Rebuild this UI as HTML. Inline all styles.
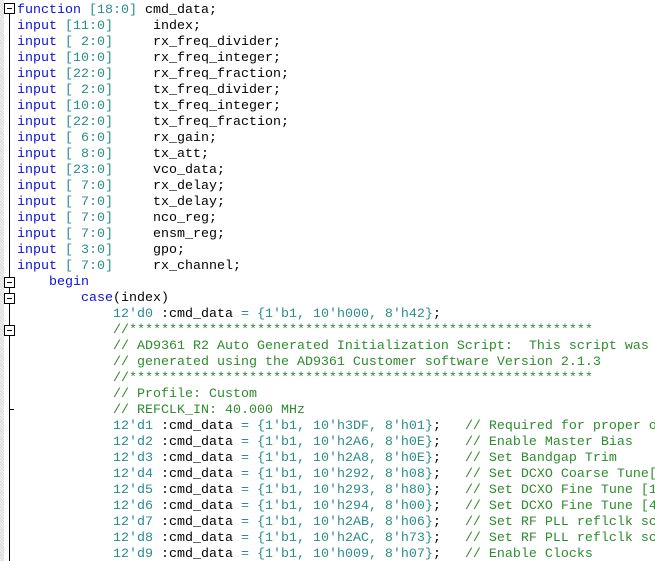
<!DOCTYPE html><html><head><style>
html,body{margin:0;width:655px;height:561px;overflow:hidden;background:#fff;position:relative}
.g{position:absolute;left:0;top:0;width:4px;height:561px;background:repeating-linear-gradient(45deg,#d8d8d8 0 1px,#f4f4f4 1px 2px)}
.vl{position:absolute;left:9px;width:1px;background:#000}
.b{position:absolute;left:4px;width:9px;height:9px;border:1px solid #000;background:#fff}
.b:after{content:"";position:absolute;left:2px;top:4px;width:5px;height:1px;background:#000}
pre{position:absolute;left:17px;top:3px;width:638px;height:558px;overflow:hidden;margin:0;font:13.33px/16px "Liberation Mono",monospace;color:#000;white-space:pre}
.k{color:#1010d0}.n{color:#2a8c8c}.c{color:#2e8b2e}
</style></head><body>
<div class="g"></div>
<div class="vl" style="top:13px;height:264px"></div>
<div class="vl" style="top:287px;height:6px"></div>
<div class="vl" style="top:303px;height:22px"></div>
<div class="vl" style="top:335px;height:226px"></div>
<div style="position:absolute;left:9px;top:409px;width:5px;height:1px;background:#000"></div>
<div class="b" style="top:3px"></div>
<div class="b" style="top:277px"></div>
<div class="b" style="top:293px"></div>
<div class="b" style="top:325px"></div>
<pre><span class="k">function</span> <span class="n">[18:0]</span> cmd_data;
<span class="k">input</span> <span class="n">[11:0]</span>     index;
<span class="k">input</span> <span class="n">[ 2:0]</span>     rx_freq_divider;
<span class="k">input</span> <span class="n">[10:0]</span>     rx_freq_integer;
<span class="k">input</span> <span class="n">[22:0]</span>     rx_freq_fraction;
<span class="k">input</span> <span class="n">[ 2:0]</span>     tx_freq_divider;
<span class="k">input</span> <span class="n">[10:0]</span>     tx_freq_integer;
<span class="k">input</span> <span class="n">[22:0]</span>     tx_freq_fraction;
<span class="k">input</span> <span class="n">[ 6:0]</span>     rx_gain;
<span class="k">input</span> <span class="n">[ 8:0]</span>     tx_att;
<span class="k">input</span> <span class="n">[23:0]</span>     vco_data;
<span class="k">input</span> <span class="n">[ 7:0]</span>     rx_delay;
<span class="k">input</span> <span class="n">[ 7:0]</span>     tx_delay;
<span class="k">input</span> <span class="n">[ 7:0]</span>     nco_reg;
<span class="k">input</span> <span class="n">[ 7:0]</span>     ensm_reg;
<span class="k">input</span> <span class="n">[ 3:0]</span>     gpo;
<span class="k">input</span> <span class="n">[ 7:0]</span>     rx_channel;
    <span class="k">begin</span>
        <span class="k">case</span>(index)
            <span class="n">12'd0</span> :cmd_data <span class="n">= {1'b1, 10'h000, 8'h42}</span>;
            <span class="c">//**********************************************************</span>
            <span class="c">// AD9361 R2 Auto Generated Initialization Script:  This script was</span>
            <span class="c">// generated using the AD9361 Customer software Version 2.1.3</span>
            <span class="c">//**********************************************************</span>
            <span class="c">// Profile: Custom</span>
            <span class="c">// REFCLK_IN: 40.000 MHz</span>
            <span class="n">12'd1</span> :cmd_data <span class="n">= {1'b1, 10'h3DF, 8'h01}</span>;   <span class="c">// Required for proper operation</span>
            <span class="n">12'd2</span> :cmd_data <span class="n">= {1'b1, 10'h2A6, 8'h0E}</span>;   <span class="c">// Enable Master Bias</span>
            <span class="n">12'd3</span> :cmd_data <span class="n">= {1'b1, 10'h2A8, 8'h0E}</span>;   <span class="c">// Set Bandgap Trim</span>
            <span class="n">12'd4</span> :cmd_data <span class="n">= {1'b1, 10'h292, 8'h08}</span>;   <span class="c">// Set DCXO Coarse Tune[5:0]</span>
            <span class="n">12'd5</span> :cmd_data <span class="n">= {1'b1, 10'h293, 8'h80}</span>;   <span class="c">// Set DCXO Fine Tune [12:5]</span>
            <span class="n">12'd6</span> :cmd_data <span class="n">= {1'b1, 10'h294, 8'h00}</span>;   <span class="c">// Set DCXO Fine Tune [4:0]</span>
            <span class="n">12'd7</span> :cmd_data <span class="n">= {1'b1, 10'h2AB, 8'h06}</span>;   <span class="c">// Set RF PLL reflclk scale</span>
            <span class="n">12'd8</span> :cmd_data <span class="n">= {1'b1, 10'h2AC, 8'h73}</span>;   <span class="c">// Set RF PLL reflclk scale</span>
            <span class="n">12'd9</span> :cmd_data <span class="n">= {1'b1, 10'h009, 8'h07}</span>;   <span class="c">// Enable Clocks</span>
</pre>
</body></html>
